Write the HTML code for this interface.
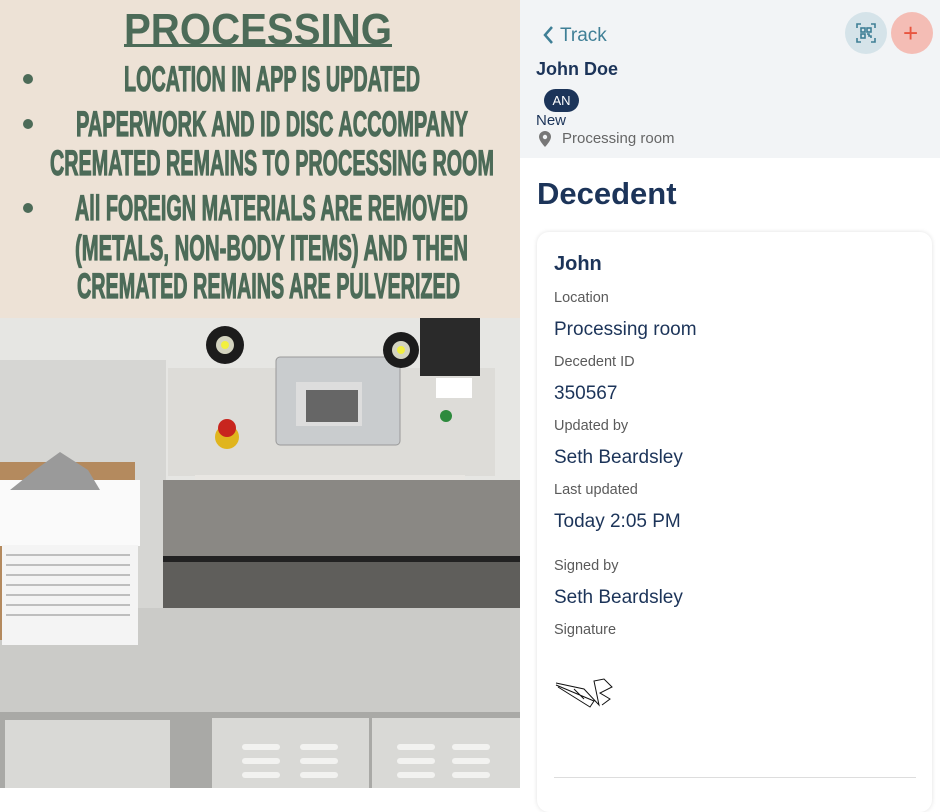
<!DOCTYPE html>
<html><head><meta charset="utf-8"><style>
*{margin:0;padding:0;box-sizing:border-box}
body{width:940px;height:788px;overflow:hidden;position:relative;background:#fff;font-family:"Liberation Sans",sans-serif}
.l{position:absolute;left:0;top:0;width:520px;height:788px}
.r{position:absolute;left:520px;top:0;width:420px;height:788px;background:#fff}
.t{position:absolute;white-space:nowrap;line-height:1}
.lab{font-size:14.5px;color:#5a5a5a;left:34px}
.val{font-size:19px;color:#1c3459;left:34px}
</style></head><body>
<div class="l">
<svg width="520" height="788" viewBox="0 0 520 788">
<rect width="520" height="318" fill="#ede2d6"/>
<g fill="#4c6b58" font-family="Liberation Sans Narrow, Liberation Sans, sans-serif" font-weight="bold">
<text x="124" y="44" font-size="44" textLength="268" lengthAdjust="spacingAndGlyphs" font-family="Liberation Sans, sans-serif">PROCESSING</text>
<rect x="124" y="44" width="268" height="3"/>
<g stroke="#4c6b58" stroke-width="1.2">
<text x="124" y="91" font-size="35" textLength="296" lengthAdjust="spacingAndGlyphs">LOCATION IN APP IS UPDATED</text>
<text x="76" y="136" font-size="35" textLength="392" lengthAdjust="spacingAndGlyphs">PAPERWORK AND ID DISC ACCOMPANY</text>
<text x="50" y="175" font-size="35" textLength="444" lengthAdjust="spacingAndGlyphs">CREMATED REMAINS TO PROCESSING ROOM</text>
<text x="75" y="220" font-size="35" textLength="393" lengthAdjust="spacingAndGlyphs">All FOREIGN MATERIALS ARE REMOVED</text>
<text x="75" y="260" font-size="35" textLength="393" lengthAdjust="spacingAndGlyphs">(METALS, NON-BODY ITEMS) AND THEN</text>
<text x="77" y="298" font-size="35" textLength="383" lengthAdjust="spacingAndGlyphs">CREMATED REMAINS ARE PULVERIZED</text>
</g>
<circle cx="28" cy="79" r="5"/><circle cx="28" cy="124" r="5"/><circle cx="28" cy="208" r="5"/>
</g>
<rect y="318" width="520" height="470" fill="#e6e6e3"/>
<rect x="0" y="360" width="166" height="250" fill="#d6d6d3"/>
<rect x="168" y="368" width="327" height="108" fill="#dddcd8"/>
<rect x="195" y="475" width="270" height="12" fill="#e8e6e2"/>
<rect x="163" y="480" width="357" height="80" fill="#8a8884"/>
<rect x="163" y="556" width="357" height="6" fill="#222"/>
<rect x="163" y="562" width="357" height="46" fill="#5f5e5b"/>
<rect x="0" y="608" width="520" height="104" fill="#cbcbc8"/>
<rect x="0" y="712" width="520" height="76" fill="#a9a9a6"/>
<rect x="5" y="720" width="165" height="68" fill="#d9d9d6"/>
<rect x="212" y="718" width="157" height="70" fill="#d9d9d6"/>
<rect x="372" y="718" width="148" height="70" fill="#d9d9d6"/>
<g fill="#f2f2f0"><rect x="242" y="744" width="38" height="6" rx="3"/><rect x="300" y="744" width="38" height="6" rx="3"/><rect x="242" y="758" width="38" height="6" rx="3"/><rect x="300" y="758" width="38" height="6" rx="3"/><rect x="242" y="772" width="38" height="6" rx="3"/><rect x="300" y="772" width="38" height="6" rx="3"/><rect x="397" y="744" width="38" height="6" rx="3"/><rect x="452" y="744" width="38" height="6" rx="3"/><rect x="397" y="758" width="38" height="6" rx="3"/><rect x="452" y="758" width="38" height="6" rx="3"/><rect x="397" y="772" width="38" height="6" rx="3"/><rect x="452" y="772" width="38" height="6" rx="3"/></g>
<rect x="276" y="357" width="124" height="88" rx="4" fill="#c9ccce" stroke="#999" />
<rect x="296" y="382" width="66" height="44" fill="#ddd"/>
<rect x="306" y="390" width="52" height="32" fill="#666"/>
<circle cx="225" cy="345" r="19" fill="#1c1c1c"/><circle cx="225" cy="345" r="9" fill="#d4d4c0"/><circle cx="225" cy="345" r="4" fill="#f2f040"/>
<circle cx="401" cy="350" r="18" fill="#1c1c1c"/><circle cx="401" cy="350" r="9" fill="#d4d4c0"/><circle cx="401" cy="350" r="4" fill="#f2f040"/>
<rect x="420" y="318" width="60" height="58" fill="#2a2a2a"/>
<rect x="436" y="378" width="36" height="20" fill="#fff"/>
<circle cx="446" cy="416" r="6" fill="#2d8a3d"/>
<circle cx="227" cy="437" r="12" fill="#e0b51e"/><circle cx="227" cy="428" r="9" fill="#c8251e"/>
<rect x="0" y="462" width="135" height="178" fill="#b48a5e"/>
<rect x="0" y="480" width="140" height="66" fill="#fafafa"/>
<rect x="2" y="545" width="136" height="100" fill="#f4f4f4"/>
<g stroke="#888" stroke-width="1"><line x1="6" y1="555" x2="130" y2="555"/><line x1="6" y1="565" x2="130" y2="565"/><line x1="6" y1="575" x2="130" y2="575"/><line x1="6" y1="585" x2="130" y2="585"/><line x1="6" y1="595" x2="130" y2="595"/><line x1="6" y1="605" x2="130" y2="605"/><line x1="6" y1="615" x2="130" y2="615"/></g>
<path d="M10 490 L100 490 L88 470 L60 452 L35 470 Z" fill="#9a9a9a"/>
</svg>
</div>
<div class="r">
<div style="position:absolute;left:0;top:0;width:420px;height:158px;background:#f2f4f6"></div>
<svg style="position:absolute;left:22px;top:25px" width="12" height="20"><path d="M10 2 L3 10 L10 18" stroke="#3f7f96" stroke-width="2.5" fill="none"/></svg>
<div class="t" style="left:40px;top:26px;font-size:19px;color:#3f7f96">Track</div>
<div style="position:absolute;left:325px;top:12px;width:42px;height:42px;border-radius:50%;background:#d5e3e9"></div>
<svg style="position:absolute;left:336px;top:23px" width="20" height="20" fill="none" stroke="#3f7f96" stroke-width="1.6"><path d="M1 5V1H5M15 1H19V5M19 15V19H15M5 19H1V15"/><rect x="5" y="5" width="4" height="4"/><rect x="11" y="5" width="4" height="4"/><rect x="5" y="11" width="4" height="4"/><path d="M11 11h2v2h2v2"/></svg>
<div style="position:absolute;left:371px;top:12px;width:42px;height:42px;border-radius:50%;background:#f4bdb5"></div>
<div class="t" style="left:383px;top:20px;font-size:26px;color:#e8553f">+</div>
<div class="t" style="left:16px;top:60px;font-size:18px;font-weight:bold;color:#1c3459">John Doe</div>
<div style="position:absolute;left:24px;top:89px;width:35px;height:23px;border-radius:12px;background:#1c3459;color:#fff;font-size:13px;text-align:center;line-height:23px">AN</div>
<div class="t" style="left:16px;top:113px;font-size:15px;color:#1c3459">New</div>
<svg style="position:absolute;left:19px;top:131px" width="12" height="16"><path d="M6 0C2.7 0 0 2.6 0 5.8 0 10 6 16 6 16S12 10 12 5.8C12 2.6 9.3 0 6 0Z" fill="#777"/><circle cx="6" cy="6" r="2.2" fill="#f2f4f6"/></svg>
<div class="t" style="left:42px;top:131px;font-size:15px;color:#666">Processing room</div>
<div class="t" style="left:17px;top:178px;font-size:31px;font-weight:bold;color:#1c3459">Decedent</div>
<div style="position:absolute;left:17px;top:232px;width:395px;height:580px;border-radius:12px;background:#fff;box-shadow:0 0 5px rgba(0,0,0,.12)">
<div class="t" style="left:17px;top:22px;font-size:20px;font-weight:bold;color:#1c3459">John</div>
<div class="t lab" style="left:17px;top:59px">Location</div>
<div class="t val" style="left:17px;top:88px">Processing room</div>
<div class="t lab" style="left:17px;top:123px">Decedent ID</div>
<div class="t val" style="left:17px;top:152px">350567</div>
<div class="t lab" style="left:17px;top:187px">Updated by</div>
<div class="t val" style="left:17px;top:216px">Seth Beardsley</div>
<div class="t lab" style="left:17px;top:251px">Last updated</div>
<div class="t val" style="left:17px;top:280px">Today 2:05 PM</div>
<div class="t lab" style="left:17px;top:327px">Signed by</div>
<div class="t val" style="left:17px;top:356px">Seth Beardsley</div>
<div class="t lab" style="left:17px;top:391px">Signature</div>
<svg style="position:absolute;left:17px;top:443px" width="62" height="36" fill="none" stroke="#111" stroke-width="1"><path d="M2 8 L30 14 L45 30 L40 6 L50 4 L58 12 L46 18 L56 24 L48 30 M2 10 L40 26 L36 32 L4 12 M20 14 L30 24"/></svg>
<div style="position:absolute;left:17px;top:545px;width:362px;height:1px;background:#ddd"></div>
</div>
</div>
</body></html>
